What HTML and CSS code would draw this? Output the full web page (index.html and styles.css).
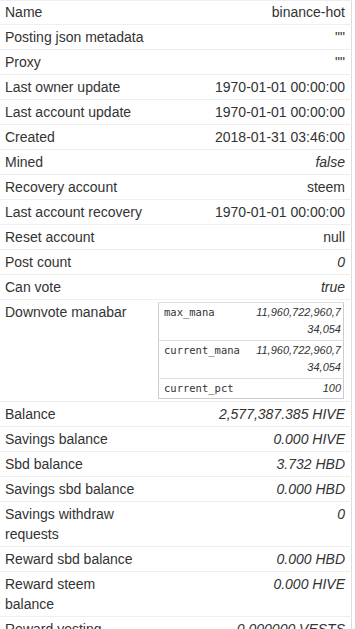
FILE: index.html
```html
<!DOCTYPE html>
<html>
<head>
<meta charset="utf-8">
<link rel="stylesheet" href="styles.css">
</head>
<body>
<table class="props">
  <tr class="first"><td class="key">Name</td><td class="val">binance-hot</td></tr>
  <tr><td class="key">Posting json metadata</td><td class="val">""</td></tr>
  <tr><td class="key">Proxy</td><td class="val">""</td></tr>
  <tr><td class="key">Last owner update</td><td class="val">1970-01-01 00:00:00</td></tr>
  <tr><td class="key">Last account update</td><td class="val">1970-01-01 00:00:00</td></tr>
  <tr><td class="key">Created</td><td class="val">2018-01-31 03:46:00</td></tr>
  <tr><td class="key">Mined</td><td class="val"><i>false</i></td></tr>
  <tr><td class="key">Recovery account</td><td class="val">steem</td></tr>
  <tr><td class="key">Last account recovery</td><td class="val">1970-01-01 00:00:00</td></tr>
  <tr><td class="key">Reset account</td><td class="val">null</td></tr>
  <tr><td class="key">Post count</td><td class="val"><i>0</i></td></tr>
  <tr><td class="key">Can vote</td><td class="val"><i>true</i></td></tr>
  <tr>
    <td class="key">Downvote manabar</td>
    <td class="val">
      <table class="sub">
        <tr><td class="skey">max_mana</td><td class="sval"><i>11,960,722,960,734,054</i></td></tr>
        <tr><td class="skey">current_mana</td><td class="sval"><i>11,960,722,960,734,054</i></td></tr>
        <tr class="last"><td class="skey">current_pct</td><td class="sval"><i>100</i></td></tr>
      </table>
    </td>
  </tr>
  <tr><td class="key">Balance</td><td class="val"><i>2,577,387.385 HIVE</i></td></tr>
  <tr><td class="key">Savings balance</td><td class="val"><i>0.000 HIVE</i></td></tr>
  <tr><td class="key">Sbd balance</td><td class="val"><i>3.732 HBD</i></td></tr>
  <tr><td class="key">Savings sbd balance</td><td class="val"><i>0.000 HBD</i></td></tr>
  <tr><td class="key">Savings withdraw requests</td><td class="val"><i>0</i></td></tr>
  <tr><td class="key">Reward sbd balance</td><td class="val"><i>0.000 HBD</i></td></tr>
  <tr><td class="key">Reward steem balance</td><td class="val"><i>0.000 HIVE</i></td></tr>
  <tr><td class="key">Reward vesting balance</td><td class="val"><i>0.000000 VESTS</i></td></tr>
</table>
</body>
</html>
```
FILE: styles.css
```css
html, body {
  margin: 0;
  padding: 0;
  background: #fff;
}
body {
  font-family: "Liberation Sans", Arial, sans-serif;
  font-size: 14px;
  line-height: 20px;
  color: #333;
}
.props {
  width: 352px;
  border-collapse: collapse;
  border-right: 1px solid #ddd;
}
.props > tbody > tr > td {
  border-top: 1px solid #eee;
  padding: 2px 6px 2px 5px;
  vertical-align: top;
}
.props > tbody > tr.first > td {
  padding-top: 1px;
}
.key {
  width: 142px;
  text-align: left;
}
.val {
  text-align: right;
}
.sub {
  width: calc(100% - 1px);
  border-collapse: collapse;
  border: 1px solid #ccc;
  font-size: 11px;
  line-height: 17px;
  table-layout: fixed;
}
.sub td {
  border-top: 1px solid #ddd;
  padding: 1px 2px 2px 5px;
  vertical-align: top;
}
.sub tr.last td {
  padding-bottom: 1px;
}
.skey {
  width: 80px;
  text-align: left;
  font-family: "DejaVu Sans Mono", "Liberation Mono", monospace;
  font-size: 10.5px;
  white-space: nowrap;
}
.sval {
  text-align: right;
  word-break: break-all;
  padding-left: 2px;
}
```
